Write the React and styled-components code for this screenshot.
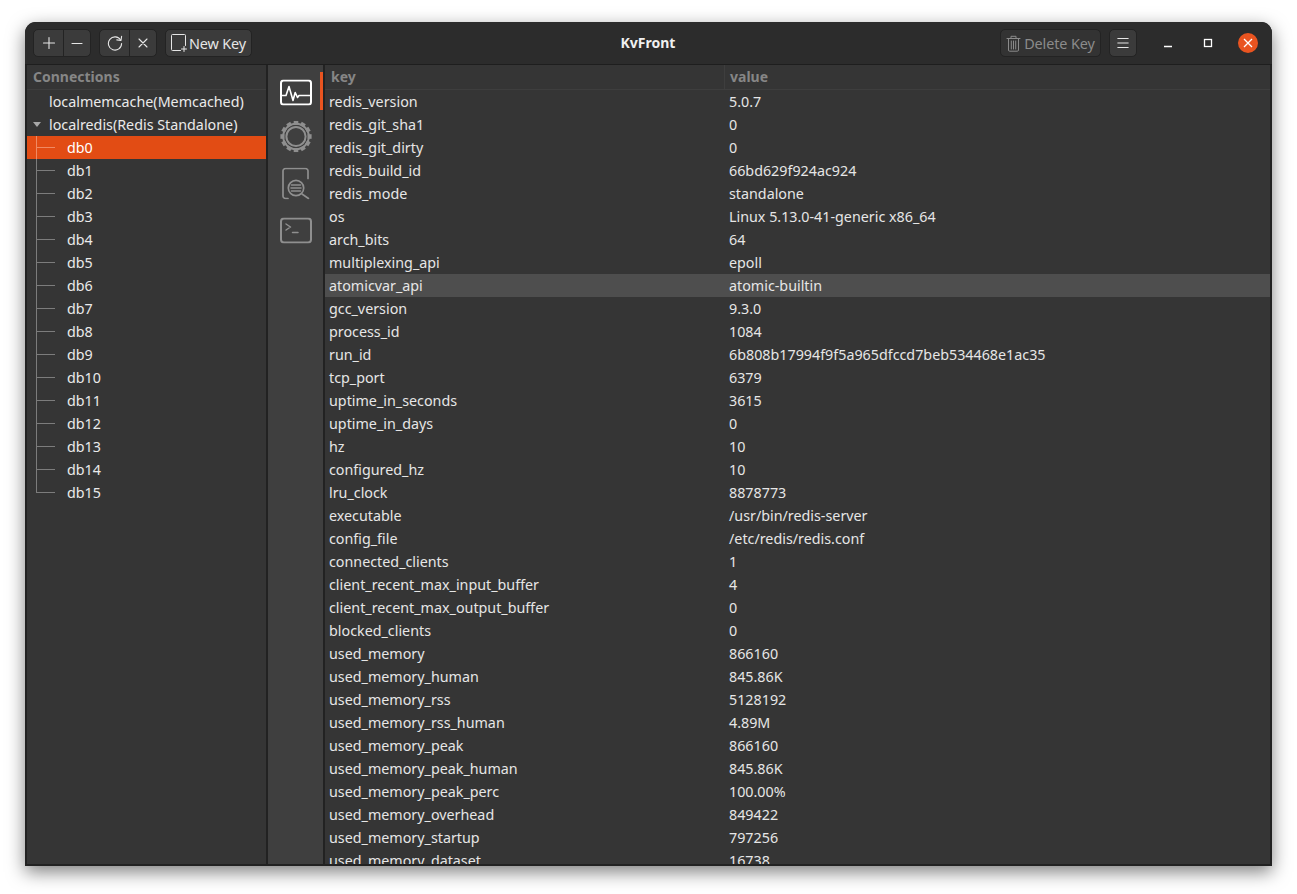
import React from "react";
import styled, { createGlobalStyle } from "styled-components";

const Global = createGlobalStyle`
  html, body { margin: 0; padding: 0; background: #fff; height: 100%; overflow: hidden; }
  body { font-family: "Noto Sans", "Liberation Sans", sans-serif; }
  * { box-sizing: border-box; }
`;

const Page = styled.div`
  padding: 22px 25px 28px;
  height: 894px;
`;
const Window = styled.div`
  width: 1247px;
  height: 844px;
  background: #1f1f1f;
  border-radius: 11px 11px 0 0;
  box-shadow: 0 6px 18px rgba(0,0,0,.5);
  overflow: hidden;
  display: flex;
  flex-direction: column;
`;
const TitleBar = styled.header`
  height: 43px;
  flex: none;
  background: #2c2c2c;
  display: grid;
  grid-template-columns: 1fr auto 1fr;
  align-items: center;
  border-bottom: 1px solid #1e1e1e;
`;
const ToolGroup = styled.div`
  display: flex;
  gap: 8px;
  align-items: center;
  justify-content: ${p => p.$end ? "flex-end" : "flex-start"};
  padding-left: ${p => p.$end ? 0 : 8}px;
`;
const Linked = styled.div`
  display: flex;
  height: 28px;
  border: 1px solid #232323;
  border-radius: 5px;
  background: ${p => p.$dim ? "#333333" : "#3b3b3b"};
  overflow: hidden;
`;
const ToolButton = styled.button`
  height: 100%;
  width: ${p => p.$w}px;
  padding: 0;
  border: 0;
  border-left: ${p => p.$joined ? "1px solid #232323" : "0"};
  background: transparent;
  color: ${p => p.$dim ? "#8b8b8b" : "#e6e6e6"};
  font: 14.4px "Noto Sans", sans-serif;
  letter-spacing: -0.1px;
  display: flex;
  align-items: center;
  justify-content: center;
  gap: ${p => p.$dim ? 3 : 1}px;
`;
const Title = styled.div`
  color: #f0f0f0;
  font-size: 14px;
  font-weight: 700;
  padding: 0 1px 2px 0;
`;
const WinControls = styled.div`
  display: flex;
  align-items: center;
  margin-left: 13px;
  padding-right: 14px;
  gap: 20px;
`;
const WinButton = styled.div`
  width: 20px;
  height: 20px;
  border-radius: 50%;
  background: ${p => p.$close ? "#e95420" : "transparent"};
  display: flex;
  align-items: center;
  justify-content: center;
`;
const Body = styled.div`
  flex: 1;
  min-height: 0;
  display: grid;
  grid-template-columns: 239px 55px 1fr;
  column-gap: 2px;
  padding: 0 2px 2px;
  background: #222;
`;
const Panel = styled.section`
  background: #353535;
  min-height: 0;
  overflow: hidden;
`;
const Sidebar = styled.nav`
  background: #3f3f3f;
  display: flex;
  flex-direction: column;
  align-items: center;
  padding-top: 8px;
  gap: 7px;
`;
const NavItem = styled.div`
  width: 100%;
  height: 39px;
  display: flex;
  align-items: center;
  justify-content: center;
  position: relative;
  padding-left: 1px;
  & > svg { transform: translateY(${p => p.$nudge || 0}px); }
  &::after {
    content: "";
    display: ${p => p.$active ? "block" : "none"};
    position: absolute;
    right: 0;
    top: -1px;
    width: 3px;
    height: 38px;
    background: #e95420;
  }
`;
const HeadRow = styled.div`
  height: 25px;
  display: flex;
  align-items: center;
  border-bottom: 1px solid #3e3e3e;
  color: #868686;
  font-size: 14px;
  font-weight: 700;
`;
const HeadCell = styled.div`
  width: ${p => p.$w ? `${p.$w}px` : "auto"};
  padding: 0 0 2px ${p => p.$pad}px;
  height: 100%;
  display: flex;
  align-items: center;
  border-right: ${p => p.$div ? "1px solid #3e3e3e" : "0"};
`;
const TreeRow = styled.div`
  height: 23px;
  display: flex;
  align-items: center;
  color: ${p => p.$sel ? "#fff" : "#eaeaea"};
  background: ${p => p.$sel ? "#e24c14" : "transparent"};
  font-size: 14.3px;
  white-space: nowrap;
`;
const Arrow = styled.span`
  width: 22px;
  padding-left: 6px;
  flex: none;
  height: 100%;
  display: flex;
  align-items: center;
  &::before {
    content: "";
    display: ${p => p.$open ? "block" : "none"};
    border-left: 4.5px solid transparent;
    border-right: 4.5px solid transparent;
    border-top: 5px solid #a8a8a8;
  }
`;
const Branch = styled.span`
  width: 40px;
  flex: none;
  height: 100%;
  background-repeat: no-repeat;
  background-image:
    linear-gradient(${p => p.$c}, ${p => p.$c}),
    linear-gradient(${p => p.$c}, ${p => p.$c});
  background-size: 1px ${p => p.$last ? "12px" : "100%"}, 18px 1px;
  background-position: 9px 0, 10px 11px;
`;
const DataRow = styled.div`
  height: 23px;
  display: flex;
  align-items: center;
  background: ${p => p.$hl ? "#4e4e4e" : "transparent"};
  color: #e6e6e6;
  font-size: 14.3px;
  white-space: nowrap;
`;
const KeyCell = styled.div`
  width: 404px;
  padding-left: 4px;
  flex: none;
`;
const ValueCell = styled.div`
  padding-left: 0;
`;

const S = { fill: "none", stroke: "currentColor", strokeLinecap: "round", strokeLinejoin: "round" };

const PlusIcon = () => <svg width="14" height="14" viewBox="0 0 14 14" {...S} strokeWidth="1.1"><path d="M7 1.5v11M1.5 7h11" /></svg>;
const MinusIcon = () => <svg width="14" height="14" viewBox="0 0 14 14" {...S} strokeWidth="1.1"><path d="M2 7.5h10" /></svg>;
const RefreshIcon = () => <svg width="16" height="16" viewBox="0 0 16 16" {...S} strokeWidth="1.1"><path d="M13.6 5A6.6 6.6 0 1 0 14.6 8.5" /><path d="M9.8 4.9l4.2.6.6-4.2" /></svg>;
const CloseSmall = () => <svg width="12" height="12" viewBox="0 0 12 12" {...S} strokeWidth="1.1"><path d="M2 2l8 8M10 2l-8 8" /></svg>;
const NewKeyIcon = () => <svg width="17" height="18" viewBox="0 0 17 18" {...S} strokeWidth="1"><path d="M9.5 16.5H1.5a1 1 0 0 1-1-1V1.5a1 1 0 0 1 1-1h12a1 1 0 0 1 1 1v10" /><path d="M13 12.5v5M10.5 15h5" /></svg>;
const TrashIcon = () => <svg width="15" height="17" viewBox="0 0 15 17" {...S} strokeWidth="1"><path d="M1 3.5h13M5 3V1.3h5V3M2.5 4v11a1.2 1.2 0 0 0 1.2 1.2h7.6a1.2 1.2 0 0 0 1.2-1.2V4M5.3 6v8M7.5 6v8M9.7 6v8" /></svg>;
const MenuIcon = () => <svg width="12" height="12" viewBox="0 0 12 12" {...S} strokeWidth="1"><path d="M.8 1.5h10.4M.8 6h10.4M.8 10.5h10.4" /></svg>;

const MonitorIcon = () => (
  <svg width="32" height="26" viewBox="0 0 32 26" fill="none" stroke="#fff" strokeWidth="2" strokeLinejoin="round" strokeLinecap="round">
    <rect x="1" y="1" width="30" height="24" rx="2.5" />
    <path d="M1.5 16H6l3-9 4 14 2.2-8 2.3 5 1.5-2H31" strokeWidth="1.6" />
  </svg>
);
const GearIcon = () => {
  const teeth = Array.from({ length: 12 }, (_, i) => i * 30);
  return (
    <svg width="32" height="32" viewBox="0 0 32 32" fill="none" stroke="#8f8f8f">
      {teeth.map(a => <rect key={a} x="13.7" y="0.4" width="4.6" height="4" fill="#8f8f8f" stroke="none" transform={`rotate(${a} 16 16)`} />)}
      <circle cx="16" cy="16" r="12.8" strokeWidth="2" />
      <circle cx="16" cy="16" r="9.6" strokeWidth="2" />
    </svg>
  );
};
const SearchDocIcon = () => (
  <svg width="28" height="32" viewBox="0 0 28 32" fill="none" stroke="#8f8f8f" strokeWidth="1.7" strokeLinecap="round">
    <path d="M6 31H3.5a2.5 2.5 0 0 1-2.5-2.5V3.5A2.5 2.5 0 0 1 3.5 1h20A2.5 2.5 0 0 1 26 3.5V11" />
    <circle cx="14" cy="20.5" r="7.7" />
    <path d="M9.5 17.5h9M9 20.5h10M9.5 23.5h9M20 26.5l6.5 4.5" strokeWidth="1.6" />
  </svg>
);
const TerminalIcon = () => (
  <svg width="32" height="26" viewBox="0 0 32 26" fill="none" stroke="#8f8f8f" strokeWidth="2" strokeLinecap="round" strokeLinejoin="round">
    <rect x="1" y="1" width="30" height="24" rx="3" />
    <path d="M6 6.5l4.5 3-4.5 3M12.5 15H18" strokeWidth="1.5" />
  </svg>
);

const dbs = Array.from({ length: 16 }, (_, i) => `db${i}`);
const rows = [
  ["redis_version","5.0.7"],["redis_git_sha1","0"],["redis_git_dirty","0"],["redis_build_id","66bd629f924ac924"],
  ["redis_mode","standalone"],["os","Linux 5.13.0-41-generic x86_64"],["arch_bits","64"],["multiplexing_api","epoll"],
  ["atomicvar_api","atomic-builtin"],["gcc_version","9.3.0"],["process_id","1084"],["run_id","6b808b17994f9f5a965dfccd7beb534468e1ac35"],
  ["tcp_port","6379"],["uptime_in_seconds","3615"],["uptime_in_days","0"],["hz","10"],["configured_hz","10"],["lru_clock","8878773"],
  ["executable","/usr/bin/redis-server"],["config_file","/etc/redis/redis.conf"],["connected_clients","1"],
  ["client_recent_max_input_buffer","4"],["client_recent_max_output_buffer","0"],["blocked_clients","0"],["used_memory","866160"],
  ["used_memory_human","845.86K"],["used_memory_rss","5128192"],["used_memory_rss_human","4.89M"],["used_memory_peak","866160"],
  ["used_memory_peak_human","845.86K"],["used_memory_peak_perc","100.00%"],["used_memory_overhead","849422"],["used_memory_startup","797256"],
  ["used_memory_dataset","16738"],
];

export default function App() {
  return (
    <Page>
      <Global />
      <Window>
        <TitleBar>
          <ToolGroup>
            <Linked><ToolButton $w={29}><PlusIcon /></ToolButton><ToolButton $w={27} $joined><MinusIcon /></ToolButton></Linked>
            <Linked><ToolButton $w={29}><RefreshIcon /></ToolButton><ToolButton $w={27} $joined><CloseSmall /></ToolButton></Linked>
            <Linked><ToolButton $w={85}><NewKeyIcon />New Key</ToolButton></Linked>
          </ToolGroup>
          <Title>KvFront</Title>
          <ToolGroup $end>
            <Linked $dim><ToolButton $w={99} $dim><TrashIcon />Delete Key</ToolButton></Linked>
            <Linked><ToolButton $w={26}><MenuIcon /></ToolButton></Linked>
            <WinControls>
              <WinButton><svg width="10" height="10" viewBox="0 0 10 10" stroke="#fff" strokeWidth="1.4"><path d="M1 8.5h8" /></svg></WinButton>
              <WinButton><svg width="10" height="10" viewBox="0 0 10 10" fill="none" stroke="#fff" strokeWidth="1.3"><rect x="1.5" y="1.5" width="7" height="7" /></svg></WinButton>
              <WinButton $close><svg width="10" height="10" viewBox="0 0 10 10" stroke="#fff" strokeWidth="1.3"><path d="M1 1l8 8M9 1l-8 8" /></svg></WinButton>
            </WinControls>
          </ToolGroup>
        </TitleBar>
        <Body>
          <Panel>
            <HeadRow><HeadCell $pad={6}>Connections</HeadCell></HeadRow>
            <TreeRow><Arrow />localmemcache(Memcached)</TreeRow>
            <TreeRow><Arrow $open />localredis(Redis Standalone)</TreeRow>
            {dbs.map((d, i) => (
              <TreeRow key={d} $sel={i === 0}>
                <Branch $c={i === 0 ? "#f08a63" : "#7c7c7c"} $last={i === 15} />{d}
              </TreeRow>
            ))}
          </Panel>
          <Sidebar>
            <NavItem $active $nudge={-0.5}><MonitorIcon /></NavItem>
            <NavItem $nudge={-2.5}><GearIcon /></NavItem>
            <NavItem $nudge={-1.5}><SearchDocIcon /></NavItem>
            <NavItem $nudge={-0.5}><TerminalIcon /></NavItem>
          </Sidebar>
          <Panel>
            <HeadRow><HeadCell $w={400} $pad={6} $div>key</HeadCell><HeadCell $pad={5}>value</HeadCell></HeadRow>
            {rows.map(([k, v]) => (
              <DataRow key={k} $hl={k === "atomicvar_api"}><KeyCell>{k}</KeyCell><ValueCell>{v}</ValueCell></DataRow>
            ))}
          </Panel>
        </Body>
      </Window>
    </Page>
  );
}
